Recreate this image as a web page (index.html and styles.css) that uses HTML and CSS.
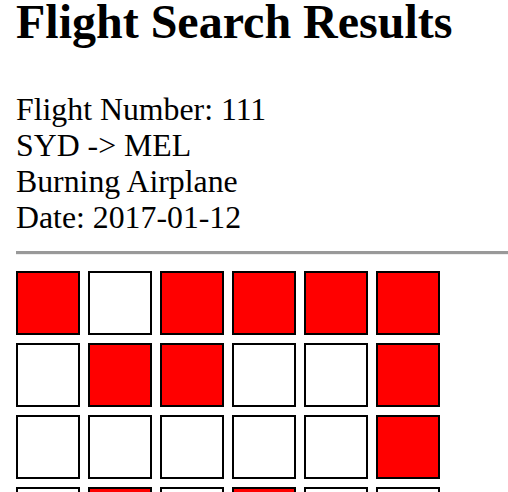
FILE: index.html
```html
<!DOCTYPE html>
<html>
<head>
<meta charset="utf-8">
<link rel="stylesheet" href="styles.css">
</head>
<body>
<h1 class="title">Flight Search Results</h1>
<div class="info">
  <div>Flight Number: 111</div>
  <div>SYD -&gt; MEL</div>
  <div>Burning Airplane</div>
  <div>Date: 2017-01-12</div>
</div>
<hr class="divider">
<div class="seats">
  <div class="seat taken"></div><div class="seat"></div><div class="seat taken"></div><div class="seat taken"></div><div class="seat taken"></div><div class="seat taken"></div>
  <div class="seat"></div><div class="seat taken"></div><div class="seat taken"></div><div class="seat"></div><div class="seat"></div><div class="seat taken"></div>
  <div class="seat"></div><div class="seat"></div><div class="seat"></div><div class="seat"></div><div class="seat"></div><div class="seat taken"></div>
  <div class="seat"></div><div class="seat taken"></div><div class="seat"></div><div class="seat taken"></div><div class="seat"></div><div class="seat"></div>
</div>
</body>
</html>
```
FILE: styles.css
```css
html, body {
  overflow: hidden;
}
body {
  margin: 0 0 0 16px;
  font-family: "Liberation Serif", "Times New Roman", serif;
  color: #000;
  background: #fff;
}
.title {
  margin: 0;
  font-size: 48px;
  line-height: 44px;
  font-weight: bold;
}
.info {
  margin-top: 48px;
  font-size: 31.8px;
  line-height: 36px;
}
.divider {
  margin: 15px -20px 16px 0;
  height: 0;
  border: 0;
  border-top: 3px solid #999;
  border-bottom: 1px solid #eee;
}
.seats {
  display: grid;
  grid-template-columns: repeat(6, 64px);
  grid-auto-rows: 64px;
  gap: 8px;
}
.seat {
  box-sizing: border-box;
  border: 2px solid #000;
  background: #fff;
}
.seat.taken {
  background: #f00;
}
```
